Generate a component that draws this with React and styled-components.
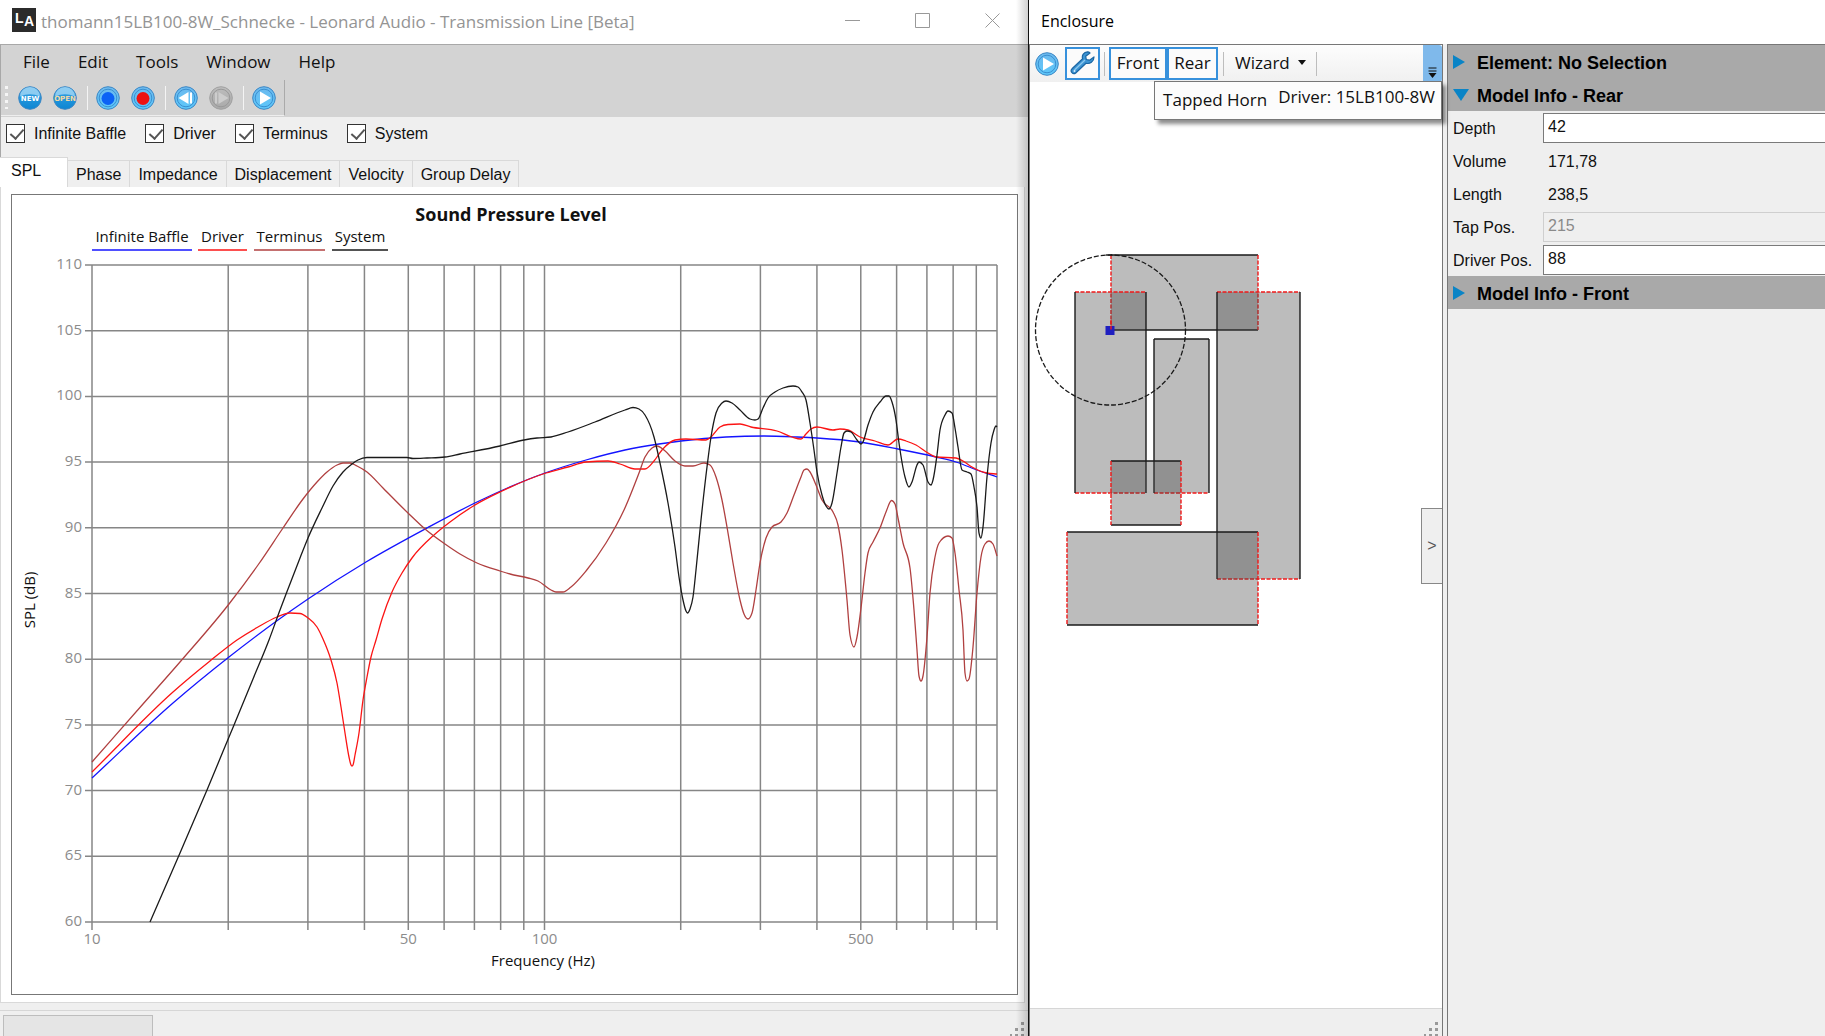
import React, { useState } from 'react'
import styled, { createGlobalStyle, css } from 'styled-components'

const GlobalStyle = createGlobalStyle`
  * {
    box-sizing: border-box;
  }
  body {
    margin: 0;
    background: #fff;
    color: #111;
    font-family: 'Liberation Sans', Arial, sans-serif;
    font-size: 16px;
    overflow: hidden;
  }
  button, input {
    font: inherit;
    color: inherit;
  }
`

const segoe = css`
  font-family: 'Open Sans', 'Segoe UI', sans-serif;
`

const Desktop = styled.div`
  display: grid;
  grid-template-columns: minmax(0, 1028fr) minmax(0, 797fr);
  height: 100vh;
`

const MainWindow = styled.section`
  position: relative;
  display: flex;
  flex-direction: column;
  min-height: 0;
  background: #efefef;
  &::after {
    content: '';
    position: absolute;
    top: 0;
    right: 0;
    bottom: 0;
    width: 12px;
    background: linear-gradient(to right, transparent, rgba(0, 0, 0, 0.18));
    pointer-events: none;
  }
`

const TitleBar = styled.header`
  ${segoe}
  flex: none;
  display: flex;
  align-items: center;
  height: 44px;
  padding: 0 27px 4px 12px;
  gap: 5px;
  background: #fff;
  color: ${({ $active }) => ($active ? '#000' : '#949494')};
  font-size: ${({ $active }) => ($active ? 16 : 17)}px;
  white-space: nowrap;
`

const Caption = styled.h1`
  flex: 1;
  margin: 0;
  padding-top: 2px;
  font-size: inherit;
  font-weight: 400;
`

const CaptionButtons = styled.div`
  display: flex;
  gap: 54px;
`

const CaptionButton = styled.button`
  display: block;
  width: 16px;
  height: 16px;
  padding: 0;
  border: 0;
  background: none;
  svg {
    display: block;
  }
`

const MenuArea = styled.div`
  flex: none;
  height: 73px;
  border-top: 1px solid #a8a8a8;
  border-left: 1px solid #a8a8a8;
  background: #d3d3d3;
`

const MenuBar = styled.nav`
  ${segoe}
  display: flex;
  height: 35px;
  align-items: center;
  padding: 0 8px 2px;
`

const MenuItem = styled.button`
  padding: 0 14px;
  border: 0;
  background: none;
  font-size: 17px;
  line-height: 24px;
`

const ToolStrip = styled.div`
  display: flex;
  align-items: center;
  height: 36px;
  width: 284px;
  padding-left: 4px;
  border-right: 1px solid #aaa;
  border-bottom: 1px solid #eee;
`

const Grip = styled.span`
  flex: none;
  width: 3px;
  height: 23px;
  margin-right: 10px;
  background: repeating-linear-gradient(#f5f5f5 0 3px, transparent 3px 7px);
`

const ToolButton = styled.button`
  flex: none;
  display: block;
  width: 24px;
  height: 24px;
  margin-right: ${({ $gap = 11 }) => $gap}px;
  padding: 0;
  border: 0;
  background: none;
  svg {
    display: block;
  }
`

const StripLine = styled.span`
  flex: none;
  width: 1px;
  height: 24px;
  margin-right: ${({ $gap = 8 }) => $gap}px;
  background: ${({ $light }) => ($light ? '#f4f4f4' : '#bdbdbd')};
`

const Filters = styled.div`
  flex: none;
  display: flex;
  gap: 19px;
  height: 40px;
  padding: 7px 5px;
  border-left: 1px solid #a8a8a8;
`

const Check = styled.label`
  display: flex;
  gap: 9px;
  height: 20px;
  line-height: 20px;
  input {
    appearance: none;
    width: 19px;
    height: 19px;
    margin: 0;
    border: 1px solid #333;
    background: #fff;
  }
  input:checked::after {
    content: '';
    display: block;
    width: 6px;
    height: 11px;
    margin: 1px 0 0 6px;
    border: solid #555;
    border-width: 0 2px 2px 0;
    transform: rotate(42deg);
  }
`

const Tabs = styled.div`
  flex: none;
  display: flex;
  align-items: flex-end;
  height: 30px;
`

const Tab = styled.button`
  height: ${({ $active }) => ($active ? 30 : 27)}px;
  min-width: ${({ $active }) => ($active ? 68 : 0)}px;
  padding: ${({ $active }) => ($active ? '0 11px 4px' : '2px 8px 0')};
  border: 1px solid #d9d9d9;
  border-width: 1px 1px 0 0;
  background: ${({ $active }) => ($active ? '#fff' : '#efefef')};
  text-align: left;
`

const TabPanel = styled.div`
  flex: 1;
  min-height: 0;
  margin-right: 3px;
  padding: 7px 6px 7px 10px;
  border: 1px solid #d9d9d9;
  border-width: 0 1px 1px 1px;
  background: #fff;
`

const ChartFrame = styled.div`
  height: 100%;
  border: 1px solid #777;
  svg {
    display: block;
    width: 100%;
    height: 100%;
  }
`

const ChartText = styled.text`
  ${segoe}
  font-size: ${({ $bold }) => ($bold ? 18 : 15)}px;
  font-weight: ${({ $bold }) => ($bold ? 700 : 400)};
  fill: ${({ $muted }) => ($muted ? '#8c8c8c' : '#111')};
`

const StatusBar = styled.footer`
  flex: none;
  display: flex;
  justify-content: ${({ $end }) => ($end ? 'flex-end' : 'space-between')};
  height: ${({ $end }) => ($end ? 28 : 26)}px;
  margin-top: ${({ $end }) => ($end ? 0 : 7)}px;
  padding: 4px 4px 0 3px;
  border-top: 1px solid #d6d6d6;
  background: #efefef;
  svg {
    align-self: flex-end;
  }
`

const StatusBox = styled.div`
  width: 150px;
  border: 1px solid #bdbdbd;
  border-bottom: 0;
  background: #e5e5e5;
`

const EnclosureWindow = styled.section`
  display: flex;
  flex-direction: column;
  min-height: 0;
  border-left: 1px solid #111;
`

const Panes = styled.div`
  flex: 1;
  display: grid;
  grid-template-columns: minmax(0, 414fr) minmax(0, 378fr);
  gap: 4px;
  min-height: 0;
  background: #efefef;
`

const CanvasPane = styled.div`
  position: relative;
  display: flex;
  flex-direction: column;
  min-height: 0;
  border: 1px solid #777;
  border-bottom: 0;
  background: #fff;
`

const EnclosureTools = styled.div`
  ${segoe}
  flex: none;
  display: flex;
  align-items: center;
  height: 37px;
  padding-left: 5px;
  background: linear-gradient(#fdfdfd, #f0f0f0);
  font-size: 17px;
`

const ToggleButton = styled.button`
  height: 33px;
  width: ${({ $width }) => $width}px;
  margin-right: ${({ $gap = 0 }) => $gap}px;
  padding: 0 0 2px;
  border: 2px solid #3791dc;
  background: #fbfbfb;
  line-height: 24px;
  svg {
    display: block;
    margin: 0 auto;
  }
`

const WizardButton = styled.button`
  display: flex;
  align-items: center;
  gap: 8px;
  padding: 0 10px 2px 3px;
  border: 0;
  background: none;
  line-height: 24px;
`

const CaretDown = styled.span`
  border: 4px solid transparent;
  border-top: 5px solid #111;
  border-bottom: 0;
`

const OverflowButton = styled.button`
  align-self: stretch;
  display: flex;
  align-items: flex-end;
  justify-content: center;
  width: 19px;
  margin-left: auto;
  padding: 0 0 4px;
  border: 0;
  border-radius: 0 3px 3px 0;
  background: #7fb9eb;
`

const OverflowPanel = styled.div`
  ${segoe}
  position: absolute;
  top: 36px;
  right: 0;
  display: flex;
  gap: 11px;
  height: 39px;
  padding: 6px 6px 0 8px;
  border: 1px solid #777;
  background: #fcfcfc;
  box-shadow: 4px 4px 4px rgba(0, 0, 0, 0.45);
  white-space: nowrap;
  font-size: 17px;
  line-height: 24px;
  span + span {
    margin-top: -3px;
  }
`

const Canvas = styled.div`
  flex: 1;
  min-height: 0;
  svg {
    display: block;
    width: 100%;
  }
`

const CollapseButton = styled.button`
  position: absolute;
  top: 463px;
  right: 0;
  width: 21px;
  height: 76px;
  padding: 0;
  border: 1px solid #888;
  border-right: 0;
  background: #efefef;
  color: #555;
`

const SidePane = styled.aside`
  border: 1px solid #777;
  border-width: 1px 0 0 1px;
  background: #efefef;
`

const SectionHeader = styled.button`
  display: flex;
  align-items: center;
  width: 100%;
  height: 33px;
  padding: 4px 5px 0;
  border: 0;
  background: #a9a9a9;
  color: #000;
  font-size: 18px;
  font-weight: 700;
  svg {
    flex: none;
    margin: 0 8px 4px 0;
  }
`

const Field = styled.div`
  display: grid;
  grid-template-columns: 90px minmax(0, 1fr);
  align-items: center;
  height: 33px;
  padding-left: 5px;
  label {
    padding-top: 3px;
  }
  input {
    width: 100%;
    height: 30px;
    padding: 0 4px 2px;
    border: 1px solid #7a7a7a;
    border-right: 0;
    border-radius: 0;
    background: #fff;
  }
  input:disabled {
    border-color: #cfcfcf;
    background: #efefef;
    color: #8a8a8a;
  }
  output {
    padding: 3px 5px 0;
  }
`

// plot area, in chart units
const LEFT = 92
const RIGHT = 997
const TOP = 265
const BOTTOM = 922

const freqX = f => LEFT + Math.log10(f / 10) * ((RIGHT - LEFT) / 2)
const splY = db => BOTTOM - ((db - 60) * (BOTTOM - TOP)) / 50

const frequencies = [10, 20, 30, 40, 50, 60, 70, 80, 90, 100, 200, 300, 400, 500, 600, 700, 800, 900, 1000]
const labelled = [10, 50, 100, 500]
const levels = [60, 65, 70, 75, 80, 85, 90, 95, 100, 105, 110]

const series = [
  {
    name: 'Infinite Baffle',
    color: '#1414ff',
    legend: [92, 192],
    points: [
      [92, 778], [173, 703], [229, 657], [278, 620], [308, 599], [366, 562],
      [427, 528], [477, 502], [545, 473], [586, 460], [625, 450], [659, 444], [681, 441],
      [726, 437], [764, 436], [797, 437], [817, 438], [860, 442], [898, 449], [936, 457], [956, 462],
      [977, 470], [997, 477]
    ]
  },
  {
    name: 'Driver',
    color: '#fb1414',
    legend: [198, 247],
    points: [
      [92, 772], [173, 692], [210, 661], [237, 640], [258, 627], [277, 617], [290, 613], [300, 613.5],
      [308, 618], [317, 627], [323, 639], [331, 660], [337, 683], [341, 707], [345, 733], [349, 757],
      [351, 765], [352, 766], [353, 765], [355, 755], [359, 733], [363, 700], [367, 677], [371, 657], [376, 640],
      [382, 619], [392, 592], [402, 573], [412, 558], [434, 535], [450, 522], [475, 505],
      [500, 492], [546, 473], [568, 467], [586, 462], [608, 461], [620, 464], [635, 469], [645, 469],
      [654, 461], [662, 450], [675, 440], [686, 439], [706, 440], [711, 437], [720, 427], [728, 424.5],
      [740, 424], [751, 427], [777, 431], [792, 437], [801, 439], [806, 434], [811, 429], [817, 427],
      [833, 430], [840, 429], [848, 430], [860, 437], [875, 441], [888, 445], [898, 439], [906, 441],
      [916, 445], [928, 453], [936, 457], [956, 458], [963, 461], [972, 467], [980, 471], [987, 473],
      [997, 474]
    ]
  },
  {
    name: 'Terminus',
    color: '#b04040',
    legend: [254, 325],
    points: [
      [92, 762], [143, 704], [180, 662], [229, 604], [258, 565], [283, 528], [303, 499],
      [317, 482], [327, 472], [337, 465], [343, 463], [350, 463], [357, 466], [367, 472], [383, 488],
      [409, 514], [425, 529], [445, 544], [460, 554], [477, 563], [500, 571], [510, 574], [528, 578],
      [538, 581], [551, 590], [556, 592], [563, 592], [571, 587], [586, 571], [606, 543], [624, 510],
      [639, 473], [645, 457], [652, 448], [657, 446], [664, 450], [675, 461], [685, 466], [693, 466],
      [704, 463], [710, 465], [716, 477], [722, 500], [727, 527], [733, 563], [740, 600], [744, 614],
      [748, 619], [752, 613], [756, 590], [760, 563], [766, 538], [772, 527], [781, 522], [787, 513],
      [794, 495], [801, 477], [804, 470], [807, 469], [810, 472], [816, 485], [822, 500], [833, 512],
      [838, 525], [842, 550], [847, 600], [850, 635], [854, 647], [857, 637], [861, 608], [865, 573],
      [868, 553], [873, 542], [880, 528], [886, 512], [891.5, 500.5], [895, 504], [898, 518], [903, 543],
      [910, 568], [914, 610], [917, 650], [919, 676], [921, 681], [923, 676], [927, 637], [930, 593],
      [935, 557], [939, 543], [948, 536], [952, 538], [955, 553], [959, 590], [963, 630], [965, 673],
      [967, 681], [969, 679], [973, 647], [977, 593], [981, 557], [985, 544], [989, 541], [993, 544],
      [997, 556]
    ]
  },
  {
    name: 'System',
    color: '#1a1a1a',
    legend: [332, 388],
    points: [
      [150, 922], [180, 853], [207, 790], [229, 737], [253, 679], [269, 640], [280, 610],
      [288, 589], [300, 558], [308, 538], [322, 508], [333, 486], [343, 472], [352, 464], [358, 460],
      [367, 457.5], [407, 457.5], [413, 458.5], [427, 458], [445, 457], [460, 454], [500, 446], [524, 440],
      [537, 438], [551, 437], [568, 432], [595, 422], [625, 410], [633, 407.5], [639, 409], [645, 415],
      [654, 437], [660, 463], [668, 503], [675, 547], [679, 577], [683, 600], [686, 611], [687.5, 613],
      [690, 609], [693, 597], [696, 570], [701, 520], [707, 467], [711, 437], [716, 413], [722, 403],
      [726, 401], [732, 403], [740, 410], [750, 419], [755, 420], [758, 419], [763, 408], [768, 398],
      [775, 392], [783, 388], [793, 386], [798, 387], [802, 392], [806, 400], [810, 423], [814, 450],
      [817, 472], [822, 495], [826, 506], [829, 509], [832, 503], [837, 473], [841, 447], [844, 433],
      [847, 431], [851, 432], [857, 440], [861, 444], [863, 442], [868, 425], [873, 412], [880, 402],
      [886, 396], [889, 396], [892, 402], [896, 420], [899, 443], [905, 477], [909, 487], [912, 482],
      [917, 465], [919, 462], [923, 465], [928, 482], [931, 485], [933, 480], [937, 455], [940, 430],
      [945, 415], [948, 411], [952, 413], [955, 428], [958, 447], [962, 470], [967, 472], [971, 474],
      [974, 487], [977, 507], [979, 533], [981, 538], [983, 527], [987, 477], [991, 443], [994, 430],
      [996, 426], [997, 427]
    ]
  }
]

// monotone cubic through the points, so dips and peaks do not overshoot
const curve = pts => {
  const step = i => pts[i + 1][0] - pts[i][0]
  const slope = i => (pts[i + 1][1] - pts[i][1]) / step(i)
  const tangent = pts.map((p, i) => {
    if (i === 0) return slope(0)
    if (i === pts.length - 1) return slope(i - 1)
    const a = slope(i - 1)
    const b = slope(i)
    const mean = (a * step(i) + b * step(i - 1)) / (step(i - 1) + step(i))
    return (Math.sign(a) + Math.sign(b)) * Math.min(Math.abs(a), Math.abs(b), Math.abs(mean) / 2)
  })
  let d = `M${pts[0][0]},${pts[0][1]}`
  for (let i = 1; i < pts.length; i++) {
    const [x0, y0] = pts[i - 1]
    const [x1, y1] = pts[i]
    const h = (x1 - x0) / 3
    d += `C${x0 + h},${y0 + tangent[i - 1] * h} ${x1 - h},${y1 - tangent[i] * h} ${x1},${y1}`
  }
  return d
}

const Chart = () => (
  <svg viewBox='12 195 1005 799' role='img' aria-label='Sound Pressure Level'>
    <ChartText x='511' y='221' $bold textAnchor='middle'>
      Sound Pressure Level
    </ChartText>
    {series.map(s => (
      <g key={s.name}>
        <ChartText x={(s.legend[0] + s.legend[1]) / 2} y='242' textAnchor='middle'>
          {s.name}
        </ChartText>
        <path d={`M${s.legend[0]} 250H${s.legend[1]}`} stroke={s.color} strokeWidth='1.5' />
      </g>
    ))}
    <g stroke='#868686' strokeWidth='1.5'>
      {levels.map(db => (
        <path key={db} d={`M85 ${splY(db)}H${RIGHT}`} />
      ))}
      {frequencies.map(f => (
        <path key={f} d={`M${freqX(f)} ${TOP}V930`} />
      ))}
    </g>
    {levels.map(db => (
      <ChartText key={db} x='82' y={splY(db) + 4} $muted textAnchor='end'>
        {db}
      </ChartText>
    ))}
    {labelled.map(f => (
      <ChartText key={f} x={freqX(f)} y='944' $muted textAnchor='middle'>
        {f}
      </ChartText>
    ))}
    <g fill='none' strokeWidth='1.3' strokeLinejoin='round'>
      {series.map(s => (
        <path key={s.name} d={curve(s.points)} stroke={s.color} />
      ))}
    </g>
    <ChartText x='543' y='966' textAnchor='middle'>
      Frequency (Hz)
    </ChartText>
    <ChartText transform='translate(35 600) rotate(-90)' textAnchor='middle'>
      SPL (dB)
    </ChartText>
  </svg>
)

const Orb = ({ muted, deep, children }) => {
  const id = muted ? 'orb-muted' : deep ? 'orb-deep' : 'orb'
  const [top, bottom] = muted ? ['#bdbdbd', '#a9a9a9'] : deep ? ['#3aa5e6', '#0d86d2'] : ['#6db9ee', '#5cc8fa']
  return (
    <svg width='24' height='24' viewBox='0 0 24 24'>
      <defs>
        <linearGradient id={id} x1='0' y1='0' x2='0' y2='1'>
          <stop offset='0' stopColor={top} />
          <stop offset='1' stopColor={bottom} />
        </linearGradient>
      </defs>
      <circle cx='12' cy='12' r='11.3' fill={`url(#${id})`} stroke={muted ? '#a0a0a0' : '#3d87c4'} />
      {deep && <path d='M2 10.5a10 9.5 0 0 1 20 0Q12 6 2 10.5Z' fill='#b5e0f8' opacity='.7' />}
      {!deep && <circle cx='12' cy='12' r='8.8' fill='none' stroke={muted ? '#999' : '#3b8fd0'} />}
      {children}
    </svg>
  )
}

const OrbText = styled.text`
  font-family: 'DejaVu Sans', sans-serif;
  font-size: 7px;
  font-weight: 700;
  text-anchor: middle;
`

const Logo = () => (
  <svg width='24' height='24' viewBox='0 0 24 24' fontFamily='Liberation Sans' fontWeight='700' fill='#fff'>
    <path d='M0 0h24v24H0z' fill='#2b2b2b' />
    <text x='3' y='15' fontSize='14'>L</text>
    <text x='12' y='18' fontSize='14'>A</text>
  </svg>
)

const SizeGrip = () => (
  <svg width='14' height='14' viewBox='0 0 14 14' fill='#999'>
    <path d='M11 0h3v3h-3zM5 6h3v3h-3zM11 6h3v3h-3zM0 12h2v2H0zM5 12h3v2h-3zM11 12h3v2h-3z' />
  </svg>
)

const Triangle = ({ open }) => (
  <svg width='16' height='16' viewBox='0 0 16 16' fill='#0a84c6'>
    <path d={open ? 'M0 2h16L8 14z' : 'M0 1v14l12-7z'} />
  </svg>
)

const Wrench = () => (
  <svg width='26' height='26' viewBox='0 0 26 26'>
    <path
      d='M17.5 1.8c-3.6.2-6 3.5-4.9 7L2 18.8c-2.3 2.3.9 6.4 3.7 4.2L16 13.2c3.8 1.2 8-1.5 8-6.3l-4.5 3.3-3.2-.7-.6-3.2L20 3c-.7-.8-1.5-1.2-2.5-1.2Z'
      fill='#3c94d3'
      stroke='#1b66a3'
      strokeWidth='1.2'
      strokeLinejoin='round'
    />
    <path d='M4.5 20 15 10' stroke='#8cc8ee' strokeWidth='1.3' />
    <circle cx='4.5' cy='21' r='1' fill='#d8eefb' />
  </svg>
)

const segments = [
  { x: 1111, y: 255, w: 147, h: 75, open: 'lr' },
  { x: 1075, y: 292, w: 71, h: 201, open: 'tb' },
  { x: 1154, y: 339, w: 55, h: 154, open: 'b' },
  { x: 1217, y: 292, w: 83, h: 287, open: 'tb' },
  { x: 1111, y: 461, w: 70, h: 64, open: 'lr' },
  { x: 1067, y: 532, w: 191, h: 93, open: 'lr' }
]

const Segment = ({ x, y, w, h, open }) => {
  const sides = {
    t: `M${x} ${y}h${w}`,
    b: `M${x} ${y + h}h${w}`,
    l: `M${x} ${y}v${h}`,
    r: `M${x + w} ${y}v${h}`
  }
  return (
    <g strokeWidth='1.4'>
      <path d={`M${x} ${y}h${w}v${h}h${-w}z`} fill='rgba(68,68,68,.36)' />
      {Object.keys(sides).map(side =>
        open.includes(side) ? (
          <path key={side} d={sides[side]} stroke='#f01818' strokeDasharray='4 1.5' />
        ) : (
          <path key={side} d={sides[side]} stroke='#1a1a1a' />
        )
      )}
    </g>
  )
}

const EnclosureDrawing = () => (
  <svg viewBox='1030 82 412 600' role='img' aria-label='Enclosure drawing'>
    {segments.map((s, i) => (
      <Segment key={i} {...s} />
    ))}
    <path d='M1106 255h6' stroke='#1a1a1a' strokeWidth='1.4' />
    <path d='M1105.5 326h9v9h-9z' fill='#1f1fc0' />
    <circle cx='1110.5' cy='330' r='75' fill='none' stroke='#1a1a1a' strokeWidth='1.3' strokeDasharray='5 2' />
    <path d='M1111 320v10' stroke='#f01818' strokeWidth='1.4' strokeDasharray='4 1.5' />
  </svg>
)

const views = ['SPL', 'Phase', 'Impedance', 'Displacement', 'Velocity', 'Group Delay']

const App = () => {
  const [view, setView] = useState('SPL')
  return (
    <Desktop>
      <GlobalStyle />
      <MainWindow>
        <TitleBar>
          <Logo />
          <Caption>thomann15LB100-8W_Schnecke - Leonard Audio - Transmission Line [Beta]</Caption>
          <CaptionButtons>
            {[
              ['Minimize', 'M0 8.5h15'],
              ['Maximize', 'M.5 1.5h14v14h-14z'],
              ['Close', 'M.5 1.5l14 14M14.5 1.5l-14 14']
            ].map(([name, d]) => (
              <CaptionButton key={name} aria-label={name}>
                <svg width='16' height='16' fill='none' stroke='#999'>
                  <path d={d} />
                </svg>
              </CaptionButton>
            ))}
          </CaptionButtons>
        </TitleBar>
        <MenuArea>
          <MenuBar>
            {['File', 'Edit', 'Tools', 'Window', 'Help'].map(m => (
              <MenuItem key={m}>{m}</MenuItem>
            ))}
          </MenuBar>
          <ToolStrip>
            <Grip />
            <ToolButton aria-label='New'>
              <Orb deep>
                <OrbText x='12' y='15' fill='#fff'>NEW</OrbText>
              </Orb>
            </ToolButton>
            <ToolButton $gap={10} aria-label='Open'>
              <Orb deep>
                <OrbText x='12' y='15' fill='#f3d9a4'>OPEN</OrbText>
              </Orb>
            </ToolButton>
            <StripLine $light />
            <ToolButton aria-label='Blue marker'>
              <Orb>
                <circle cx='12' cy='12.5' r='6.5' fill='#0b62f5' />
              </Orb>
            </ToolButton>
            <ToolButton $gap={10} aria-label='Red marker'>
              <Orb>
                <circle cx='12' cy='12.5' r='6.5' fill='#ee1111' />
              </Orb>
            </ToolButton>
            <StripLine $light />
            <ToolButton aria-label='Step back'>
              <Orb>
                <path d='M14.5 6v12L4.5 12zM16 6.5h2v11h-2z' fill='#fff' />
              </Orb>
            </ToolButton>
            <ToolButton $gap={10} aria-label='Step forward' disabled>
              <Orb muted>
                <path d='M9.5 6v12l10-6zM6 6.5h2v11H6z' fill='#cdcdcd' />
              </Orb>
            </ToolButton>
            <StripLine $light />
            <ToolButton $gap={0} aria-label='Run'>
              <Orb>
                <path d='M8 5.5v13l11-6.5z' fill='#fff' />
              </Orb>
            </ToolButton>
          </ToolStrip>
        </MenuArea>
        <Filters>
          {series.map(s => (
            <Check key={s.name}>
              <input type='checkbox' defaultChecked />
              {s.name}
            </Check>
          ))}
        </Filters>
        <Tabs role='tablist'>
          {views.map(v => (
            <Tab key={v} role='tab' $active={v === view} aria-selected={v === view} onClick={() => setView(v)}>
              {v}
            </Tab>
          ))}
        </Tabs>
        <TabPanel role='tabpanel'>
          <ChartFrame>
            <Chart />
          </ChartFrame>
        </TabPanel>
        <StatusBar>
          <StatusBox />
          <SizeGrip />
        </StatusBar>
      </MainWindow>

      <EnclosureWindow>
        <TitleBar $active>
          <Caption>Enclosure</Caption>
        </TitleBar>
        <Panes>
          <CanvasPane>
            <EnclosureTools>
              <ToolButton $gap={6} aria-label='Run'>
                <Orb>
                  <path d='M8 5.5v13l11-6.5z' fill='#fff' />
                </Orb>
              </ToolButton>
              <ToggleButton $width={35} $gap={4} aria-label='Settings'>
                <Wrench />
              </ToggleButton>
              <StripLine $gap={4} />
              <ToggleButton $width={58}>Front</ToggleButton>
              <ToggleButton $width={51} $gap={5}>Rear</ToggleButton>
              <StripLine />
              <WizardButton aria-haspopup='menu'>
                Wizard
                <CaretDown />
              </WizardButton>
              <StripLine />
              <OverflowButton aria-label='More'>
                <svg width='9' height='11' viewBox='0 0 9 11'>
                  <path d='M.5 1h8M.5 4h8' stroke='#111' />
                  <path d='M.5 6h8l-4 5z' fill='#111' />
                </svg>
              </OverflowButton>
            </EnclosureTools>
            <Canvas>
              <EnclosureDrawing />
            </Canvas>
            <StatusBar $end>
              <SizeGrip />
            </StatusBar>
            <OverflowPanel>
              <span>Tapped Horn</span>
              <span>Driver: 15LB100-8W</span>
            </OverflowPanel>
            <CollapseButton aria-label='Collapse panel'>&gt;</CollapseButton>
          </CanvasPane>
          <SidePane>
            <SectionHeader>
              <Triangle />
              Element: No Selection
            </SectionHeader>
            <SectionHeader aria-expanded='true'>
              <Triangle open />
              Model Info - Rear
            </SectionHeader>
            <Field>
              <label htmlFor='depth'>Depth</label>
              <input id='depth' defaultValue='42' />
            </Field>
            <Field>
              <label htmlFor='volume'>Volume</label>
              <output id='volume'>171,78</output>
            </Field>
            <Field>
              <label htmlFor='length'>Length</label>
              <output id='length'>238,5</output>
            </Field>
            <Field>
              <label htmlFor='tap'>Tap Pos.</label>
              <input id='tap' defaultValue='215' disabled />
            </Field>
            <Field>
              <label htmlFor='driver'>Driver Pos.</label>
              <input id='driver' defaultValue='88' />
            </Field>
            <SectionHeader>
              <Triangle />
              Model Info - Front
            </SectionHeader>
          </SidePane>
        </Panes>
      </EnclosureWindow>
    </Desktop>
  )
}

export default App
